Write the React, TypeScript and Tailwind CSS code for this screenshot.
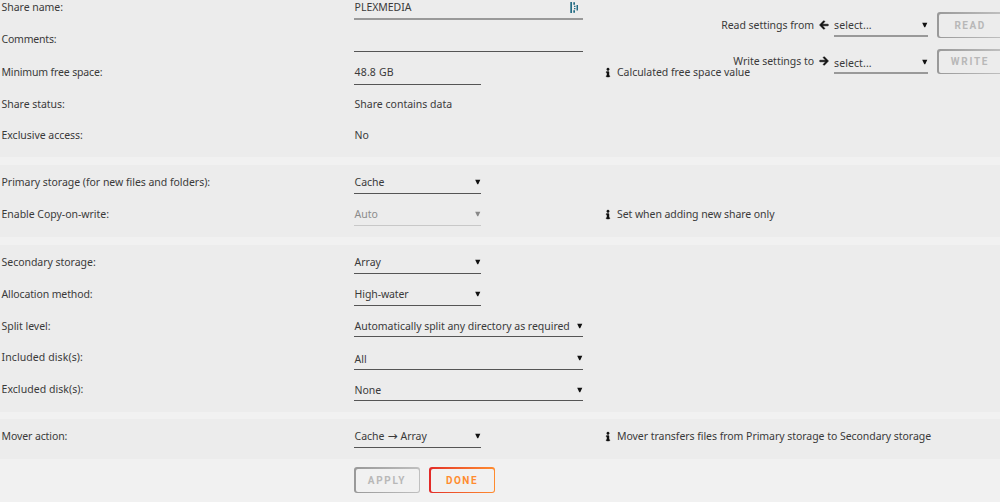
import type { ReactNode } from "react";
import { FaArrowLeft, FaArrowRight, FaInfo } from "react-icons/fa";

function Caret({ className }: { className: string }) {
  return (
    <svg viewBox="0 0 6 6" className={`mr-[0.5px] h-[6px] w-[5.5px] shrink-0 ${className}`}>
      <path d="M0.2 0.5H5.8L3.5 5.500H2.500Z" fill="currentColor" />
    </svg>
  );
}

function Row({ className, label, labelClass, children }: { className: string; label: string; labelClass: string; children?: ReactNode }) {
  return (
    <div className={`flex items-start ${className}`}>
      <div className="w-[354px] shrink-0 pl-[1.5px]">
        <div className={`leading-4 ${labelClass}`}>{label}</div>
      </div>
      {children}
    </div>
  );
}

function Field({ className, valueClass, value, children }: { className: string; valueClass: string; value: ReactNode; children?: ReactNode }) {
  return (
    <div className={`flex h-full shrink-0 items-start justify-between ${className}`}>
      <div className={`pl-[0.6px] leading-4 ${valueClass}`}>{value}</div>
      {children}
    </div>
  );
}

function Hint({ className, children }: { className: string; children: ReactNode }) {
  return (
    <div className={`flex items-center leading-4 ${className}`}>
      <FaInfo className="mr-[6px] h-[9px] w-[6px] overflow-visible stroke-current stroke-[24] text-[#111]" />
      <span>{children}</span>
    </div>
  );
}

export default function App() {
  return (
    <div className="relative h-[502px] w-[1000px] overflow-hidden whitespace-nowrap bg-[#f1f1f1] font-['Noto_Sans',sans-serif] text-[10.5px] tracking-[-0.03px] text-[#3a3a3a]">
      <section className="h-[157px] bg-[#ececec]">
        <Row className="h-[20px]" label="Share name:" labelClass="-mt-px">
          <Field className="w-[229px] border-b-2 border-[#999]" valueClass="-mt-px" value="PLEXMEDIA">
            <svg viewBox="0 0 9 12" className="mt-[2px] mr-[4px] h-[12px] w-[9px]" fill="#236c84">
              <path d="M0.300 0h1.700v11H0.300zM3.300 0.300h1.700v2.400H3.300zM3.300 8.300h1.700v2.400H3.300zM4 3.800h1.500v1.200H4zM4 6h1.500v1.200H4zM6.500 3H8v5.500H6.500z" />
            </svg>
          </Field>
        </Row>
        <Row className="h-[32px]" label="Comments:" labelClass="mt-[11px] tracking-[-0.2px]">
          <Field className="w-[229px] border-b border-[#555]" valueClass="" value="" />
        </Row>
        <Row className="h-[33px]" label="Minimum free space:" labelClass="mt-[12px] tracking-[-0.15px]">
          <Field className="w-[127px] border-b border-[#555]" valueClass="mt-[12px] tracking-[0.15px]" value="48.8 GB" />
          <Hint className="mt-[12px] ml-[124px] tracking-[-0.03px]">Calculated free space value</Hint>
        </Row>
        <Row className="h-[31px]" label="Share status:" labelClass="mt-[11px]">
          <Field className="" valueClass="mt-[11px] tracking-[0px]" value="Share contains data" />
        </Row>
        <Row className="h-[31px]" label="Exclusive access:" labelClass="mt-[11px]">
          <Field className="" valueClass="mt-[11px]" value="No" />
        </Row>
      </section>

      <section className="mt-[8px] h-[72px] bg-[#ececec]">
        <Row className="h-[29px]" label="Primary storage (for new files and folders):" labelClass="mt-[9px]">
          <Field className="w-[127px] border-b border-[#555]" valueClass="mt-[9px]" value="Cache">
            <Caret className="mt-[14px] text-[#111]" />
          </Field>
        </Row>
        <Row className="h-[32px]" label="Enable Copy-on-write:" labelClass="mt-[12px]">
          <Field className="w-[127px] border-b border-[#c8c8c8] text-[#8b8b8b]" valueClass="mt-[12px]" value="Auto">
            <Caret className="mt-[17px] text-[#888]" />
          </Field>
          <Hint className="mt-[12px] ml-[124px] tracking-[-0.07px]">Set when adding new share only</Hint>
        </Row>
      </section>

      <section className="mt-[8px] h-[167px] bg-[#ececec]">
        <Row className="h-[29px]" label="Secondary storage:" labelClass="mt-[9px]">
          <Field className="w-[127px] border-b border-[#555]" valueClass="mt-[9px]" value="Array">
            <Caret className="mt-[14px] text-[#111]" />
          </Field>
        </Row>
        <Row className="h-[32px]" label="Allocation method:" labelClass="mt-[12px] tracking-[-0.12px]">
          <Field className="w-[127px] border-b border-[#555]" valueClass="mt-[12px] tracking-[-0.1px]" value="High-water">
            <Caret className="mt-[17px] text-[#111]" />
          </Field>
        </Row>
        <Row className="h-[31px]" label="Split level:" labelClass="mt-[12px]">
          <Field className="w-[229px] border-b border-[#555]" valueClass="mt-[12px]" value="Automatically split any directory as required">
            <Caret className="mt-[17px] text-[#111]" />
          </Field>
        </Row>
        <Row className="h-[33px]" label="Included disk(s):" labelClass="mt-[12px] tracking-[0.1px]">
          <Field className="w-[229px] border-b border-[#555]" valueClass="mt-[14px]" value="All">
            <Caret className="mt-[18px] text-[#111]" />
          </Field>
        </Row>
        <Row className="h-[31px]" label="Excluded disk(s):" labelClass="mt-[11px] tracking-[0.05px]">
          <Field className="w-[229px] border-b border-[#555]" valueClass="mt-[12px]" value="None">
            <Caret className="mt-[17px] text-[#111]" />
          </Field>
        </Row>
      </section>

      <section className="mt-[7px] h-[40px] bg-[#ececec]">
        <Row className="h-[29px]" label="Mover action:" labelClass="mt-[9px] tracking-[-0.1px]">
          <Field
            className="w-[127px] border-b border-[#555]"
            valueClass="mt-[9px]"
            value={
              <span className="flex items-center">
                Cache
                <span className="mx-[3px] font-['DejaVu_Sans',sans-serif] text-[12px]">→</span>
                Array
              </span>
            }
          >
            <Caret className="mt-[14px] text-[#111]" />
          </Field>
          <Hint className="mt-[9px] ml-[124px] tracking-[-0.045px]">Mover transfers files from Primary storage to Secondary storage</Hint>
        </Row>
      </section>

      <div className="mt-[8px] ml-[354px] flex gap-[9px] font-['Roboto',sans-serif] text-[10px] font-bold">
        <button className="h-[26px] w-[66px] rounded-[3px] bg-linear-to-r from-[#999] to-[#c0c0c0] p-[1.5px] tracking-[1.7px]">
          <span className="flex h-full items-center justify-center rounded-[2px] bg-[#f1f1f1] text-[#b8b8b8]">APPLY</span>
        </button>
        <button className="h-[26px] w-[66px] rounded-[3px] bg-linear-to-r from-[#e22828] to-[#ff8c2f] p-[1.5px] tracking-[1.5px]">
          <span className="flex h-full items-center justify-center rounded-[2px] bg-[#f1f1f1] text-[#ff8c2f]">DONE</span>
        </button>
      </div>

      <div className="absolute top-0 left-[700px] w-[303px]">
        <div className="flex h-[38px] items-start">
          <div className="mt-[17px] w-[114px] text-right leading-4">Read settings from</div>
          <FaArrowLeft className="mt-[20px] ml-[5px] h-[10px] w-[10px] overflow-visible stroke-current stroke-[28] text-[#111]" />
          <div className="ml-[5px] flex h-[37px] w-[94px] items-start justify-between border-b-2 border-[#999]">
            <span className="mt-[17px] leading-4 tracking-[0.1px]">select...</span>
            <Caret className="mt-[22px] text-[#111]" />
          </div>
          <button className="mt-[12px] ml-[9px] h-[26px] w-[66px] shrink-0 rounded-[3px] bg-linear-to-r from-[#999] to-[#c0c0c0] p-[1.5px] font-['Roboto',sans-serif] text-[10px] font-bold tracking-[1.5px]">
            <span className="flex h-full items-center justify-center rounded-[2px] bg-[#ececec] text-[#b8b8b8]">READ</span>
          </button>
        </div>
        <div className="flex h-[38px] items-start">
          <div className="mt-[15px] w-[114px] text-right leading-4">Write settings to</div>
          <FaArrowRight className="mt-[18px] ml-[5px] h-[10px] w-[10px] overflow-visible stroke-current stroke-[28] text-[#111]" />
          <div className="ml-[5px] flex h-[36px] w-[94px] items-start justify-between border-b-2 border-[#999]">
            <span className="mt-[17px] leading-4 tracking-[0.1px]">select...</span>
            <Caret className="mt-[21px] text-[#111]" />
          </div>
          <button className="mt-[11px] ml-[9px] h-[25px] w-[66px] shrink-0 rounded-[3px] bg-linear-to-r from-[#999] to-[#c0c0c0] p-[1.5px] font-['Roboto',sans-serif] text-[10px] font-bold tracking-[1.7px]">
            <span className="flex h-full items-center justify-center rounded-[2px] bg-[#ececec] text-[#b8b8b8]">WRITE</span>
          </button>
        </div>
      </div>
    </div>
  );
}
